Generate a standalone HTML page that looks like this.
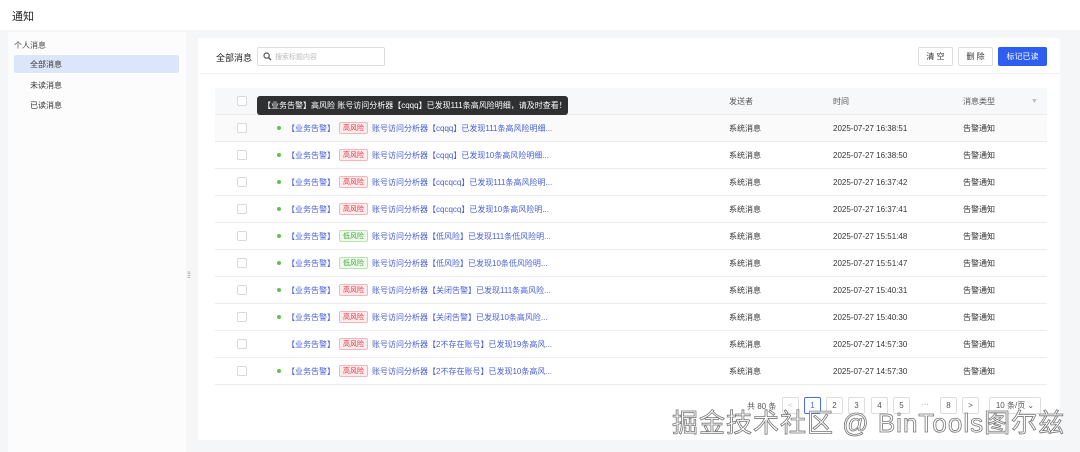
<!DOCTYPE html>
<html><head><meta charset="utf-8"><style>
*{margin:0;padding:0;box-sizing:border-box}
body{width:1080px;height:452px;background:#f5f6f8;font-family:"Liberation Sans","Noto Sans CJK SC",sans-serif;font-size:8px;color:#333;position:relative;overflow:hidden}
.a{position:absolute}
.top{left:0;top:0;width:1080px;height:30px;background:#fff}
.side{left:8px;top:32px;width:178px;height:420px;background:#fcfcfd}
.main{left:198px;top:38px;width:862px;height:402px;background:#fff}
.tb{left:215px;top:88px;width:832px;height:300px;background:#fff}
.row{left:215px;width:832px;height:27px;border-bottom:1px solid #ececee;display:flex;align-items:center}
.hd{background:#f7f8fa;color:#555}
.cb{position:absolute;left:22px;width:10px;height:10px;border:1px solid #d9d9d9;border-radius:2px;background:#fff}
.c1{position:absolute;left:62px;display:flex;align-items:center;color:#4a61d8}
.dot{width:4px;height:4px;border-radius:50%;background:#63c052;margin-right:6px}
.tag{font-size:7px;padding:0 3px;height:12px;line-height:11px;border:1px solid;border-radius:2px;margin:0 4px}
.hi{color:#e0303b;background:#fdecee;border-color:#f5b5b8}
.lo{color:#3fa83a;background:#eef9ec;border-color:#b8e3b1}
.c2{position:absolute;left:514px}.c3{position:absolute;left:618px}.c4{position:absolute;left:748px}
.btn{top:47px;height:19px;border:1px solid #ddd;border-radius:2px;background:#fff;font-size:8px;display:flex;align-items:center;justify-content:center}
.pg{top:397px;height:17px;width:17px;border:1px solid #ddd;border-radius:2px;background:#fff;font-size:8px;display:flex;align-items:center;justify-content:center;color:#555}
</style></head><body>
<div class="a top"></div>
<div class="a" style="left:12px;top:8px;font-size:11px;color:#222">通知</div>
<div class="a side"></div>
<div class="a" style="left:14px;top:40px;color:#444">个人消息</div>
<div class="a" style="left:14px;top:55px;width:165px;height:18px;background:#dce6fb;border-radius:2px"></div>
<div class="a" style="left:30px;top:59px;color:#333">全部消息</div>
<div class="a" style="left:30px;top:80px">未读消息</div>
<div class="a" style="left:30px;top:100px">已读消息</div>
<div class="a" style="left:187px;top:270px;color:#999;font-size:9px;letter-spacing:-1px">⁞⁞</div>
<div class="a main"></div>
<div class="a" style="left:200px;top:73px;width:860px;height:1px;background:#f0f0f0"></div>
<div class="a" style="left:216px;top:51px;font-size:9px;color:#222">全部消息</div>
<div class="a" style="left:257px;top:47px;width:128px;height:19px;border:1px solid #ddd;border-radius:2px;background:#fff;color:#bbb;font-size:7px;padding:4px 0 0 17px">搜索标题内容</div>
<svg class="a" style="left:263px;top:52px" width="9" height="9" viewBox="0 0 9 9"><circle cx="3.6" cy="3.6" r="2.6" fill="none" stroke="#555" stroke-width="1.2"/><path d="M5.5 5.5L8 8" stroke="#555" stroke-width="1.3"/></svg>
<div class="a btn" style="left:918px;width:35px">清 空</div>
<div class="a btn" style="left:958px;width:35px">删 除</div>
<div class="a btn" style="left:998px;width:49px;background:#2e5ef0;border-color:#2e5ef0;color:#fff">标记已读</div>
<div class="a tb"></div>
<div class="a row hd" style="top:88px"><div class="cb"></div><div class="c2">发送者</div><div class="c3">时间</div><div class="c4">消息类型</div><div style="position:absolute;left:816px;color:#bbb;font-size:7px">▼</div></div>
<div class="a row" style="top:115px;background:#fafafa"><div class="cb"></div><div class="c1"><span class="dot"></span>【业务告警】<span class="tag hi">高风险</span>账号访问分析器【cqqq】已发现111条高风险明细...</div><div class="c2">系统消息</div><div class="c3">2025-07-27 16:38:51</div><div class="c4">告警通知</div></div>
<div class="a row" style="top:142px"><div class="cb"></div><div class="c1"><span class="dot"></span>【业务告警】<span class="tag hi">高风险</span>账号访问分析器【cqqq】已发现10条高风险明细...</div><div class="c2">系统消息</div><div class="c3">2025-07-27 16:38:50</div><div class="c4">告警通知</div></div>
<div class="a row" style="top:169px"><div class="cb"></div><div class="c1"><span class="dot"></span>【业务告警】<span class="tag hi">高风险</span>账号访问分析器【cqcqcq】已发现111条高风险明...</div><div class="c2">系统消息</div><div class="c3">2025-07-27 16:37:42</div><div class="c4">告警通知</div></div>
<div class="a row" style="top:196px"><div class="cb"></div><div class="c1"><span class="dot"></span>【业务告警】<span class="tag hi">高风险</span>账号访问分析器【cqcqcq】已发现10条高风险明...</div><div class="c2">系统消息</div><div class="c3">2025-07-27 16:37:41</div><div class="c4">告警通知</div></div>
<div class="a row" style="top:223px"><div class="cb"></div><div class="c1"><span class="dot"></span>【业务告警】<span class="tag lo">低风险</span>账号访问分析器【低风险】已发现111条低风险明...</div><div class="c2">系统消息</div><div class="c3">2025-07-27 15:51:48</div><div class="c4">告警通知</div></div>
<div class="a row" style="top:250px"><div class="cb"></div><div class="c1"><span class="dot"></span>【业务告警】<span class="tag lo">低风险</span>账号访问分析器【低风险】已发现10条低风险明...</div><div class="c2">系统消息</div><div class="c3">2025-07-27 15:51:47</div><div class="c4">告警通知</div></div>
<div class="a row" style="top:277px"><div class="cb"></div><div class="c1"><span class="dot"></span>【业务告警】<span class="tag hi">高风险</span>账号访问分析器【关闭告警】已发现111条高风险...</div><div class="c2">系统消息</div><div class="c3">2025-07-27 15:40:31</div><div class="c4">告警通知</div></div>
<div class="a row" style="top:304px"><div class="cb"></div><div class="c1"><span class="dot"></span>【业务告警】<span class="tag hi">高风险</span>账号访问分析器【关闭告警】已发现10条高风险...</div><div class="c2">系统消息</div><div class="c3">2025-07-27 15:40:30</div><div class="c4">告警通知</div></div>
<div class="a row" style="top:331px"><div class="cb"></div><div class="c1"><span class="dot" style="background:transparent"></span>【业务告警】<span class="tag hi">高风险</span>账号访问分析器【2不存在账号】已发现19条高风...</div><div class="c2">系统消息</div><div class="c3">2025-07-27 14:57:30</div><div class="c4">告警通知</div></div>
<div class="a row" style="top:358px"><div class="cb"></div><div class="c1"><span class="dot"></span>【业务告警】<span class="tag hi">高风险</span>账号访问分析器【2不存在账号】已发现10条高风...</div><div class="c2">系统消息</div><div class="c3">2025-07-27 14:57:30</div><div class="c4">告警通知</div></div>
<div class="a" style="left:257px;top:96px;width:311px;height:19px;background:#2f3032;border-radius:3px;color:#fff;font-size:8px;line-height:19px;padding-left:6px">【业务告警】高风险 账号访问分析器【cqqq】已发现111条高风险明细，请及时查看！</div>
<div class="a" style="left:747px;top:401px;color:#555">共 80 条</div>
<div class="a pg" style="left:782px;color:#ccc">&lt;</div>
<div class="a pg" style="left:804px;border-color:#4a6cf0;color:#4a6cf0">1</div>
<div class="a pg" style="left:826px">2</div>
<div class="a pg" style="left:848px">3</div>
<div class="a pg" style="left:871px">4</div>
<div class="a pg" style="left:893px">5</div>
<div class="a" style="left:921px;top:400px;color:#aaa">···</div>
<div class="a pg" style="left:940px">8</div>
<div class="a pg" style="left:962px">&gt;</div>
<div class="a pg" style="left:989px;width:52px">10 条/页 ⌄</div>
<div class="a" style="left:672px;top:403px;font-size:26px;color:#fff;-webkit-text-stroke:0.8px #777;white-space:nowrap;letter-spacing:1px">掘金技术社区 @ BinTools图尔兹</div>
</body></html>
